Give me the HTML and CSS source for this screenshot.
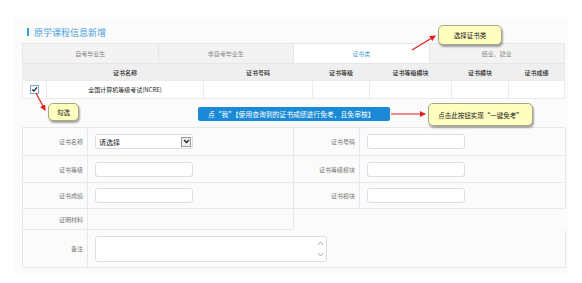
FILE: index.html
```html
<!DOCTYPE html>
<html>
<head>
    <title>原学课程信息新增</title>
    <link rel="stylesheet" href="styles.css">
</head>
<body>
    <div class="panel">
        <div class="title"><span class="bar"></span>原学课程信息新增</div>

        <div class="tabs">
            <div class="tab">自考毕业生</div>
            <div class="tab">非自考毕业生</div>
            <div class="tab active">证书类</div>
            <div class="tab">结业、肄业</div>
        </div>

        <table class="cert">
            <tr class="head">
                <td class="c0"></td>
                <td class="c1">证书名称</td>
                <td class="c2">证书号码</td>
                <td class="c3">证书等级</td>
                <td class="c4">证书等级模块</td>
                <td class="c5">证书模块</td>
                <td class="c6">证书成绩</td>
            </tr>
            <tr class="data">
                <td class="c0"><span class="check"><svg width="7" height="7" viewBox="0 0 8 8"><path d="M1.5 4 L3.3 5.8 L6.8 1.5" fill="none" stroke="#222" stroke-width="1.5"/></svg></span></td>
                <td class="c1">全国计算机等级考试(NCRE)</td>
                <td></td><td></td><td></td><td></td><td></td>
            </tr>
        </table>

        <div class="actions">
            <div class="btn">点“我”【使用查询到的证书成绩进行免考，且免审核】</div>
        </div>

        <div class="form">
            <div class="lbl">证书名称</div>
            <div class="fld"><div class="select">请选择<span class="drop"><svg width="7" height="5" viewBox="0 0 7 5"><path d="M1 1 L3.5 3.5 L6 1" fill="none" stroke="#222" stroke-width="1.4"/></svg></span></div></div>
            <div class="lbl">证书号码</div>
            <div class="fld"><div class="input"></div></div>

            <div class="lbl">证书等级</div>
            <div class="fld"><div class="input"></div></div>
            <div class="lbl">证书等级模块</div>
            <div class="fld"><div class="input"></div></div>

            <div class="lbl">证书成绩</div>
            <div class="fld"><div class="input"></div></div>
            <div class="lbl">证书模块</div>
            <div class="fld"><div class="input"></div></div>

            <div class="lbl short">证明材料</div>
            <div class="fld short"></div>
            <div class="gap"></div>

            <div class="lbl memo">备注</div>
            <div class="fld memo wide">
                <div class="textarea">
                    <svg class="spin" width="7" height="20" viewBox="0 0 7 20">
                        <path d="M1 6 L3.5 3 L6 6" fill="none" stroke="#aaa" stroke-width="1"/>
                        <path d="M1 14 L3.5 17 L6 14" fill="none" stroke="#aaa" stroke-width="1"/>
                    </svg>
                </div>
            </div>
        </div>

        <div class="note n1">勾选</div>
        <div class="note n2">选择证书类</div>
        <div class="note n3">点击此按钮实现“一键免考”</div>

        <svg class="arrows" width="582" height="283" viewBox="0 0 582 283">
            <defs>
                <marker id="head" markerWidth="6" markerHeight="6" refX="5" refY="3" orient="auto" markerUnits="userSpaceOnUse">
                    <path d="M0 0 L6 3 L0 6 Z" fill="#e0201c"/>
                </marker>
            </defs>
            <line x1="36" y1="93" x2="45" y2="110" stroke="#e0201c" stroke-width="1.2" marker-end="url(#head)"/>
            <line x1="391" y1="114" x2="425" y2="114" stroke="#e0201c" stroke-width="1.2" marker-end="url(#head)"/>
            <line x1="412" y1="50" x2="435" y2="36" stroke="#e0201c" stroke-width="1.2" marker-end="url(#head)"/>
        </svg>
    </div>
</body>
</html>
```

FILE: styles.css
```css
body {
    margin: 0;
    background: #fff;
    font-family: "Noto Sans CJK SC", "Liberation Sans", sans-serif;
    font-size: 6px;
    color: #555;
}
.panel {
    margin: 17px 14px 10px 13px;
    padding: 0 3px 6px 9px;
    height: 250px;
    background: #fbfbfb;
}
.title {
    height: 26px;
    padding-left: 5px;
    display: flex;
    align-items: center;
    padding-top: 4px;
    box-sizing: border-box;
    font-size: 9px;
    color: #4a9fd8;
}
.bar {
    width: 2px;
    height: 8px;
    background: #3c98dc;
    margin-right: 5px;
}
.tabs {
    display: flex;
    height: 21px;
    border: 1px solid #e6e6e6;
    border-right: none;
    box-sizing: border-box;
    background: #f3f3f3;
}
.tab {
    width: 135px;
    border-right: 1px solid #e6e6e6;
    display: flex;
    align-items: center;
    justify-content: center;
    color: #888;
}
.tab.active {
    background: #fff;
    color: #4a9fd8;
}
.cert {
    width: 543px;
    border-collapse: collapse;
    table-layout: fixed;
}
.cert td {
    border: 1px solid #ececec;
    text-align: center;
    padding: 0;
}
.head td {
    height: 16px;
    background: #efefef;
    color: #222;
    font-weight: 500;
    border-top: none;
}
.data td {
    height: 17px;
    background: #fff;
    color: #222;
}
.c0 { width: 23px; }
.c1 { width: 156px; }
.c2 { width: 108px; }
.c3 { width: 56px; }
.c4 { width: 81px; }
.c5 { width: 56px; }
.check {
    display: inline-flex;
    width: 7px;
    height: 7px;
    border: 1px solid #7aa8d8;
    background: #fff;
    vertical-align: middle;
    margin-right: 1px;
}
.actions {
    height: 28px;
    display: flex;
    align-items: center;
    padding-left: 176px;
}
.btn {
    width: 192px;
    height: 14px;
    background: #1a8ad6;
    color: #fff;
    border-radius: 2px;
    font-size: 6.8px;
    white-space: nowrap;
    display: flex;
    align-items: center;
    padding-left: 10px;
    box-sizing: border-box;
    margin-top: 2px;
}
.form {
    display: grid;
    grid-template-columns: 65px 206px 66px 206px;
    grid-template-rows: 28px 27px 26px 21px 38px;
    width: 543px;
    border-top: 1px solid #e8e8e8;
    border-left: 1px solid #e8e8e8;
    box-sizing: border-box;
}
.lbl, .fld {
    border-right: 1px solid #e8e8e8;
    border-bottom: 1px solid #e8e8e8;
    display: flex;
    align-items: center;
}
.lbl {
    justify-content: flex-end;
    padding-right: 4px;
    color: #777;
}
.fld {
    padding-left: 7px;
}
.gap {
    grid-column: span 2;
}
.fld.wide {
    grid-column: span 3;
}
.input, .select {
    width: 98px;
    height: 15px;
    border: 1px solid #ddd;
    border-radius: 3px;
    background: #fff;
    box-sizing: border-box;
}
.select {
    display: flex;
    align-items: center;
    justify-content: space-between;
    padding: 0 1px 0 3px;
    color: #222;
    font-size: 7px;
}
.drop {
    width: 10px;
    height: 10px;
    border: 1px solid #999;
    background: #eee;
    display: flex;
    align-items: center;
    justify-content: center;
    box-sizing: border-box;
}
.textarea {
    width: 232px;
    height: 26px;
    border: 1px solid #ddd;
    border-radius: 3px;
    background: #fff;
    display: flex;
    justify-content: flex-end;
    align-items: center;
    box-sizing: border-box;
    padding-right: 2px;
}
.note {
    position: absolute;
    background: #fefebe;
    border: 1px solid #a8a880;
    border-radius: 5px;
    box-shadow: 1px 2px 2px rgba(0, 0, 0, 0.35);
    color: #222;
    font-size: 6.5px;
    display: flex;
    align-items: center;
    justify-content: center;
    box-sizing: border-box;
}
.n1 { left: 48px; top: 103px; width: 31px; height: 18px; }
.n2 { left: 438px; top: 25px; width: 64px; height: 20px; }
.n3 { left: 428px; top: 103px; width: 105px; height: 23px; }
.arrows {
    position: absolute;
    left: 0;
    top: 0;
    pointer-events: none;
}
```
